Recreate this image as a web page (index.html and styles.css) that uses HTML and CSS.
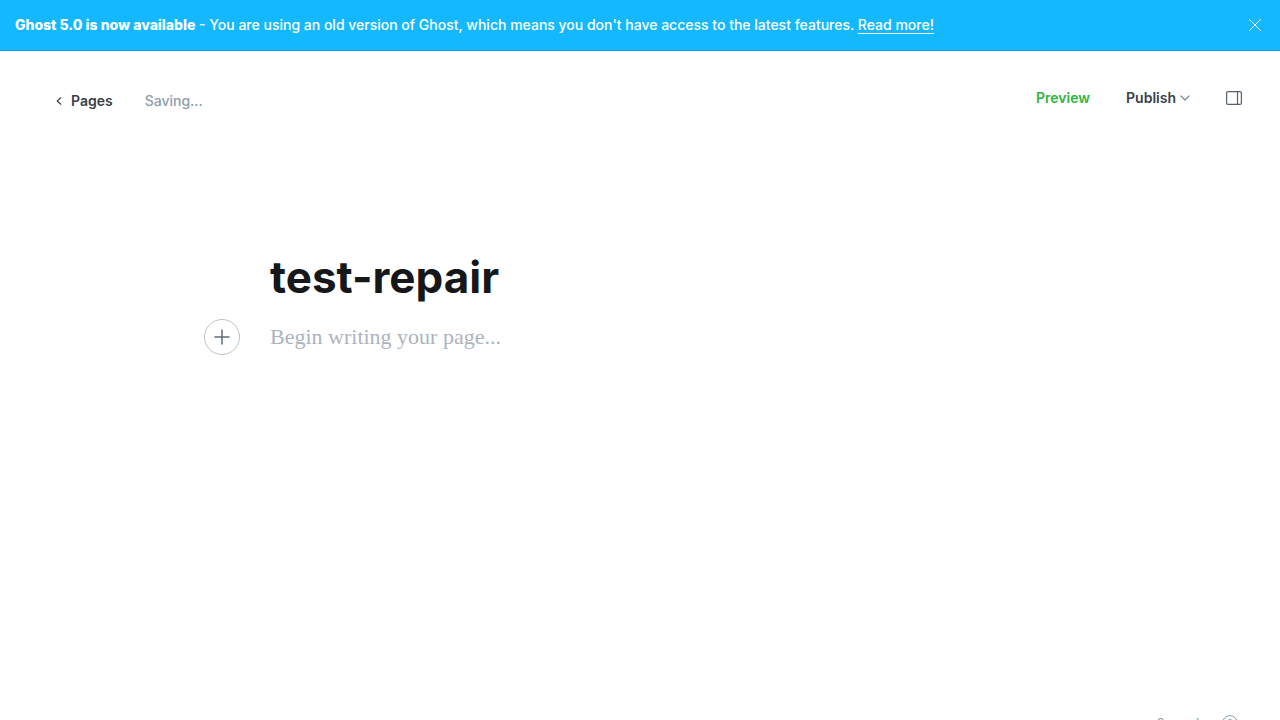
FILE: index.html
```html
<!DOCTYPE html>
<html lang="en">
<head>
<meta charset="utf-8">
<meta name="viewport" content="width=device-width, initial-scale=1">
<title>test-repair</title>
<link rel="stylesheet" href="styles.css">
</head>
<body>
<div class="app">
  <aside class="banner">
    <p class="banner-text"><strong>Ghost 5.0 is now available</strong> - You are using an old version of Ghost, which means you don't have access to the latest features. <a href="#">Read more!</a></p>
    <button class="banner-close" type="button" aria-label="Close">
      <svg width="14" height="14" viewBox="0 0 14 14" fill="none" stroke="currentColor"><path d="M1 1l12 12M13 1L1 13"/></svg>
    </button>
  </aside>
  <header class="toolbar">
    <nav class="crumbs">
      <a class="back" href="#">
        <svg width="6" height="8" viewBox="0 0 6 8" fill="none" stroke="currentColor" stroke-width="1.2" stroke-linecap="round" stroke-linejoin="round"><path d="M4.8 .8L1.2 4l3.6 3.2"/></svg>
        Pages
      </a>
      <span class="status">Saving...</span>
    </nav>
    <div class="actions">
      <button class="preview" type="button">Preview</button>
      <button class="publish" type="button">Publish
        <svg width="10" height="6" viewBox="0 0 10 6" fill="none" stroke="currentColor" stroke-width="1.3" stroke-linecap="round" stroke-linejoin="round"><path d="M1 1l4 4 4-4"/></svg>
      </button>
      <button class="settings" type="button" aria-label="Settings">
        <svg width="16" height="14" viewBox="0 0 16 14" fill="none" stroke="currentColor" stroke-width="1.2"><rect x=".6" y=".6" width="14.8" height="12.8" rx="1.5"/><path d="M11.5 .5v13"/></svg>
      </button>
    </div>
  </header>
  <main class="editor">
    <input class="title" type="text" value="test-repair" aria-label="Page title" spellcheck="false">
    <div class="body-row">
      <button class="add" type="button" aria-label="Add a card">
        <svg width="16" height="16" viewBox="0 0 16 16" fill="none" stroke="currentColor" stroke-width="1.5" stroke-linecap="round"><path d="M8 1v14M1 8h14"/></svg>
      </button>
      <textarea class="content" rows="1" placeholder="Begin writing your page..." aria-label="Page content"></textarea>
    </div>
  </main>
  <footer class="footer">
    <span>0 words</span>
    <a href="#" aria-label="Help">
      <svg width="16" height="16" viewBox="0 0 16 16" fill="none" stroke="currentColor" stroke-linecap="round"><circle cx="8" cy="8" r="7.4"/><path d="M6 6.2a2 2 0 1 1 2.8 1.9c-.5.2-.8.5-.8 1v.6M8 11.8v.1"/></svg>
    </a>
  </footer>
</div>
</body>
</html>
```
FILE: styles.css
```css
* { box-sizing: border-box; }
body {
  margin: 0;
  height: 100vh;
  overflow: hidden;
  background: #fff;
  color: #15171a;
  font-family: Inter, "Liberation Sans", sans-serif;
  font-size: 14px;
  line-height: 20px;
}
a { color: inherit; text-decoration: none; }
button {
  display: flex;
  align-items: center;
  padding: 0;
  border: 0;
  background: none;
  color: inherit;
  font: inherit;
  cursor: pointer;
}
svg { display: block; flex: none; }
input, textarea {
  padding: 0;
  border: 0;
  outline: 0;
  background: none;
}
.app {
  display: flex;
  flex-direction: column;
  height: calc(100vh + 30px);
}
.banner {
  display: flex;
  align-items: center;
  justify-content: space-between;
  padding: 15px 18px 15px 15px;
  border-bottom: 1px solid #00a0e8;
  background: #14b8ff;
  color: #fff;
  font-weight: 500;
}
.banner-text { margin: 0; }
.banner-text strong { font-weight: 800; }
.banner-text a { text-decoration: underline; text-underline-offset: 3px; }
.toolbar {
  display: flex;
  align-items: flex-start;
  justify-content: space-between;
  padding: 37px 38px 0 56px;
  color: #394047;
  font-weight: 600;
}
.crumbs {
  display: flex;
  gap: 32px;
  padding-top: 3px;
}
.back {
  display: flex;
  align-items: center;
  gap: 9px;
}
.status { color: #8e9cac; font-weight: 500; }
.actions {
  display: flex;
  align-items: center;
  gap: 36px;
}
.preview { color: #30b53c; }
.publish { gap: 4px; }
.publish svg { color: #7c8b9a; }
.settings { color: #54606b; }
.editor {
  flex: 1;
  width: 100%;
  max-width: 740px;
  margin: 0 auto;
  padding-top: 138px;
}
.title {
  display: block;
  width: 100%;
  height: 56px;
  color: #15171a;
  font-family: inherit;
  font-size: 44px;
  font-weight: 700;
}
.body-row {
  display: flex;
  align-items: center;
  gap: 30px;
  margin: 14px 0 0 -66px;
}
.add {
  justify-content: center;
  width: 36px;
  height: 36px;
  border: 1px solid #b9c3cd;
  border-radius: 50%;
  color: #626d79;
}
.content {
  flex: 1;
  height: 32px;
  resize: none;
  color: #15171a;
  font-family: Georgia, "Liberation Serif", serif;
  font-size: 22px;
  line-height: 32px;
}
.content::placeholder { color: #abb4be; opacity: 1; }
.footer {
  display: flex;
  align-items: center;
  justify-content: flex-end;
  gap: 16px;
  padding: 0 42px 17px;
  color: #8e9cac;
  font-size: 13px;
}
```
